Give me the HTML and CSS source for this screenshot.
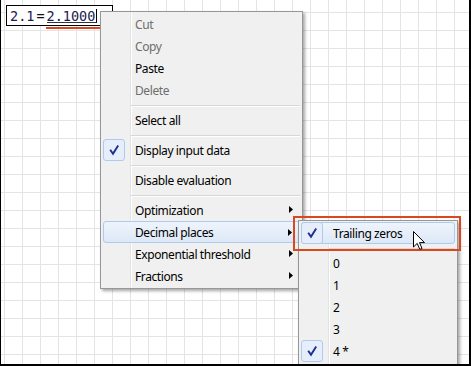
FILE: index.html
```html
<!DOCTYPE html>
<html lang="en">
<head>
  <meta charset="UTF-8">
  <title>Worksheet - context menu</title>
  <link rel="stylesheet" href="styles.css">
</head>
<body>
  <div class="sheet">

    <!-- formula region -->
    <div class="formula">
      <span class="input">2.1</span><span class="eq">=</span><span class="result">2.1000</span>
    </div>
    <div class="mark"></div>

    <!-- context menu -->
    <ul class="menu main-menu">
      <li class="item disabled">Cut</li>
      <li class="item disabled">Copy</li>
      <li class="item">Paste</li>
      <li class="item disabled">Delete</li>
      <li class="sep"></li>
      <li class="item">Select all</li>
      <li class="sep"></li>
      <li class="item checked">
        <span class="check"><svg viewBox="0 0 22 22"><path d="M7.2 10.8 L10 14.8 L15.2 6.6"/></svg></span>
        Display input data
      </li>
      <li class="sep"></li>
      <li class="item">Disable evaluation</li>
      <li class="sep"></li>
      <li class="item sub">Optimization<i class="arrow"></i></li>
      <li class="item sub hover">Decimal places<i class="arrow"></i></li>
      <li class="item sub">Exponential threshold<i class="arrow"></i></li>
      <li class="item sub">Fractions<i class="arrow"></i></li>
    </ul>

    <!-- submenu: decimal places -->
    <ul class="menu sub-menu">
      <li class="item checked hover">
        <span class="check"><svg viewBox="0 0 22 22"><path d="M7.2 10.8 L10 14.8 L15.2 6.6"/></svg></span>
        Trailing zeros
      </li>
      <li class="sep"></li>
      <li class="item">0</li>
      <li class="item">1</li>
      <li class="item">2</li>
      <li class="item">3</li>
      <li class="item checked">
        <span class="check"><svg viewBox="0 0 22 22"><path d="M7.2 10.8 L10 14.8 L15.2 6.6"/></svg></span>
        4 *
      </li>
    </ul>

    <!-- callout frame around the hovered entry -->
    <div class="callout"></div>

    <svg class="pointer" viewBox="0 0 13 20" width="13" height="20">
      <path d="M0.5 0.5 L0.5 16 L4.2 12.4 L6.8 18.4 L9 17.4 L6.5 11.6 L11.5 11.6 Z"/>
    </svg>

  </div>
</body>
</html>
```

FILE: styles.css
```css
body {
  margin: 0;
  font-family: "Noto Sans", "Open Sans", sans-serif;
}

.sheet {
  position: relative;
  width: 471px;
  height: 366px;
  box-sizing: border-box;
  padding: 5px 0 0 5px;
  overflow: hidden;
  border-left: 1px solid #000;
  border-right: 2px solid #000;
  border-bottom: 2px solid #000;
  background-color: #fff;
  background-image:
    linear-gradient(#e4e4e4 1px, transparent 1px),
    linear-gradient(90deg, #e4e4e4 1px, transparent 1px);
  background-size: 18px 18px;
  background-position: 3px 12px;
}

/* formula */
.formula {
  display: flex;
  align-items: flex-start;
  width: 107px;
  height: 21px;
  box-sizing: border-box;
  padding: 3px 0 0 3px;
  border: 1px solid #000;
  background: #fff;
  font-family: "DejaVu Sans Mono", monospace;
  font-size: 13.5px;
  line-height: 15px;
  color: #1c2150;
}

.eq {
  margin: 0 2px;
  color: #111;
}

.result {
  height: 13px;
  padding-right: 1px;
  border-right: 1px solid #000;
  border-bottom: 1px solid #333;
}

.mark {
  width: 54px;
  height: 2px;
  margin: 1px 0 0 40px;
  background: #e0461d;
}

/* menus */
.menu {
  position: absolute;
  margin: 0;
  padding: 1px 2px;
  list-style: none;
  box-sizing: border-box;
  border: 1px solid #979797;
  background-color: #f0f0f0;
  background-image: linear-gradient(90deg, transparent 29px, #e2e3e3 29px, #e2e3e3 30px, #fff 30px, #fff 31px, transparent 31px);
  box-shadow: 2px 2px 3px rgba(0, 0, 0, 0.35);
  font-size: 12px;
  letter-spacing: -0.4px;
  color: #000;
}

.main-menu {
  left: 99px;
  top: 11px;
  width: 203px;
}

.sub-menu {
  left: 297px;
  top: 220px;
  width: 160px;
  height: 170px;
}

.item {
  position: relative;
  height: 22px;
  padding: 2px 0 0 32px;
  line-height: 20px;
  box-sizing: border-box;
  white-space: nowrap;
  color: #000;
}

.item.disabled {
  color: #6d6d6d;
}

.item.hover {
  border: 1px solid #aecbee;
  border-radius: 3px;
  padding: 1px 0 0 31px;
  background: linear-gradient(#eef4fc, #dde8f7);
}

.check {
  position: absolute;
  left: 0;
  top: 0;
  width: 22px;
  height: 22px;
  box-sizing: border-box;
  border: 1px solid #aecbee;
  border-radius: 3px;
  background: #e6eefb;
}

.hover .check {
  left: -1px;
  top: -1px;
}

.check svg {
  position: absolute;
  left: -1px;
  top: -1px;
  width: 22px;
  height: 22px;
  fill: none;
  stroke: #1c2d93;
  stroke-width: 1.9;
}

.arrow {
  position: absolute;
  right: 7px;
  top: 7px;
  width: 4px;
  height: 7px;
  background: #000;
  clip-path: polygon(0 0, 100% 50%, 0 100%);
}

.sep {
  height: 8px;
  margin-left: 28px;
  background: linear-gradient(transparent 4px, #d7d7d7 4px, #d7d7d7 5px, #fff 5px, #fff 6px, transparent 6px);
}

.callout {
  position: absolute;
  left: 292px;
  top: 216px;
  width: 168px;
  height: 35px;
  box-sizing: border-box;
  border: 2px solid #d9481f;
}

.pointer {
  position: absolute;
  left: 412px;
  top: 231px;
  fill: #fff;
  stroke: #000;
  stroke-width: 1;
}
```
